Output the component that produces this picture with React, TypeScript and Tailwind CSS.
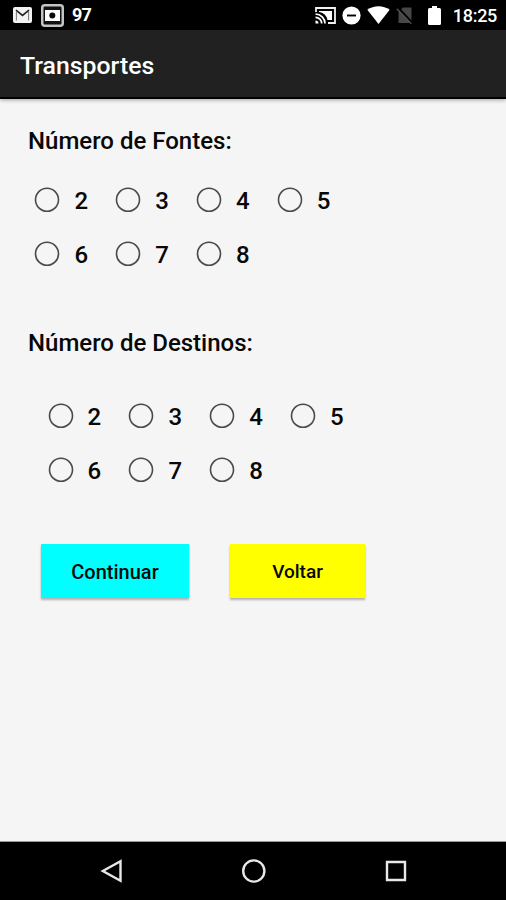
import { useState } from 'react';

const OPTIONS = [2, 3, 4, 5, 6, 7, 8];

function StatusBar() {
  return (
    <div className="flex h-[30px] items-center justify-between bg-black text-white">
      <div className="flex h-full items-center">
        <svg className="ml-[13px] h-4 w-[19px]" viewBox="0 0 19 16">
          <rect width="19" height="16" rx="2" fill="#f2f2f2" />
          <path d="M3.4 13.5V5M15.6 13.5V5" fill="none" stroke="#777" strokeWidth="1" />
          <path d="M3 3.2l6.5 5.3 6.5-5.3" fill="none" stroke="#222" strokeWidth="1.7" />
        </svg>
        <svg className="ml-[9px] h-[23px] w-[23px]" viewBox="0 0 23 23">
          <rect x="1.25" y="1.25" width="20.5" height="20.5" rx="2.5" fill="#111" stroke="#c4c4c4" strokeWidth="2.5" />
          <path d="M4 6h15v11H4z" fill="#fff" />
          <circle cx="11.3" cy="11.5" r="5" fill="#fff" />
          <circle cx="11.3" cy="11.5" r="3" fill="#0a0a0a" />
        </svg>
        <span className="ml-2 text-[18px] leading-none font-bold tracking-[-0.8px]">97</span>
      </div>
      <div className="flex h-full items-center">
        <svg className="h-[17px] w-[21px]" viewBox="0 0 21 17">
          <path d="M1 5V1h19v15h-7" fill="none" stroke="#f0f0f0" strokeWidth="1.8" />
          <path d="M4 4h13v9h-4.5A9.5 9.5 0 0 0 4 5z" fill="#fff" />
          <path d="M0.5 7a9.5 9.5 0 0 1 9.5 9.5M0.5 10.3a6.2 6.2 0 0 1 6.2 6.2" fill="none" stroke="#fff" strokeWidth="1.7" />
          <path d="M0.5 13.5a3 3 0 0 1 3 3h-3z" fill="#fff" />
        </svg>
        <svg className="ml-[6px] h-[19px] w-[19px]" viewBox="0 0 19 19">
          <circle cx="9.5" cy="9.5" r="9.1" fill="#fff" />
          <path d="M5 9.5h9" stroke="#000" strokeWidth="1.9" />
        </svg>
        <svg className="ml-[6px] h-[18px] w-[23px]" viewBox="0 0 23 18">
          <path d="M0.3 3.8C6.5-.9 16.5-.9 22.7 3.8L11.5 18z" fill="#fff" />
        </svg>
        <svg className="ml-[6px] h-[19px] w-[18px]" viewBox="0 0 18 19">
          <path d="M7 1.5h8.5v15.5H2.5V6z" fill="#474747" />
          <path d="M1.5 1.5l15 16" stroke="#000" strokeWidth="2.6" />
          <path d="M.8 2.8l14.5 15" stroke="#555" strokeWidth="1.3" />
        </svg>
        <svg className="ml-[14px] h-[19px] w-[13px]" viewBox="0 0 13 19">
          <path d="M4 0h5v2h2.5a1.5 1.5 0 0 1 1.5 1.5v14a1.5 1.5 0 0 1-1.5 1.5h-10A1.5 1.5 0 0 1 0 17.5v-14A1.5 1.5 0 0 1 1.5 2H4z" fill="#fff" />
        </svg>
        <span className="mt-px mr-[9px] ml-3 text-[18px] leading-none font-medium tracking-[-0.3px]">18:25</span>
      </div>
    </div>
  );
}

type RadioGridProps = {
  name: string;
  className: string;
};

function RadioGrid({ name, className }: RadioGridProps) {
  const [selected, setSelected] = useState<number | null>(null);

  return (
    <div className={`grid w-fit grid-cols-[repeat(4,80.8px)] ${className}`}>
      {OPTIONS.map((option) => (
        <label key={option} className="flex h-[54px] items-center text-2xl font-medium">
          <input
            type="radio"
            name={name}
            className="sr-only"
            checked={selected === option}
            onChange={() => setSelected(option)}
          />
          <svg className="mr-[14px] h-[26px] w-[26px]" viewBox="0 0 26 26">
            <circle cx="13" cy="12.8" r="11.5" fill="none" stroke="#4a4a4a" strokeWidth="1.6" />
            {selected === option && <circle cx="13" cy="12.8" r="6" fill="#4a4a4a" />}
          </svg>
          <span className="pt-px">{option}</span>
        </label>
      ))}
    </div>
  );
}

function NavBar() {
  return (
    <div className="flex h-[58px] items-center bg-black">
      <svg className="ml-[100px] h-6 w-6" viewBox="0 0 24 24" fill="none" stroke="#e8e8e8" strokeWidth="2.4">
        <path d="M2.8 12L20.5 2.2v19.6z" />
      </svg>
      <svg className="ml-[118px] h-6 w-6" viewBox="0 0 24 24" fill="none" stroke="#e8e8e8" strokeWidth="2.4">
        <circle cx="11.8" cy="12" r="10.6" />
      </svg>
      <svg className="ml-[118px] h-6 w-6" viewBox="0 0 24 24" fill="none" stroke="#e8e8e8" strokeWidth="2.4">
        <path d="M3 3h18v18H3z" />
      </svg>
    </div>
  );
}

export default function App() {
  return (
    <div className="flex h-[900px] w-[506px] flex-col bg-[#f5f5f5] font-[Roboto,sans-serif] text-[#080808]">
      <StatusBar />
      <header className="flex h-[69px] items-center border-b-2 border-black bg-[#212121] pt-[5px] pl-5 shadow-[0_1px_4px_rgba(0,0,0,0.35)]">
        <h1 className="text-[24.8px] font-medium text-white">Transportes</h1>
      </header>

      <main className="flex-1 border-b border-[#999] pt-[26px]">
        <h2 className="ml-7 text-2xl leading-8 font-medium">Número de Fontes:</h2>
        <RadioGrid name="fontes" className="mt-[16px] ml-[34.4px]" />

        <h2 className="mt-[46px] ml-7 text-2xl leading-8 font-medium">Número de Destinos:</h2>
        <RadioGrid name="destinos" className="mt-[30px] ml-[47.6px]" />

        <div className="mt-[47px] ml-[41px] flex gap-[41px]">
          <button className="h-[54px] w-[148px] bg-[#00ffff] pt-px text-xl font-medium shadow-[0_2px_2px_rgba(0,0,0,0.28)]">
            Continuar
          </button>
          <button className="h-[54px] w-[135px] bg-[#ffff00] pt-0.5 text-[19px] font-medium shadow-[0_2px_2px_rgba(0,0,0,0.28)]">
            Voltar
          </button>
        </div>
      </main>

      <NavBar />
    </div>
  );
}
